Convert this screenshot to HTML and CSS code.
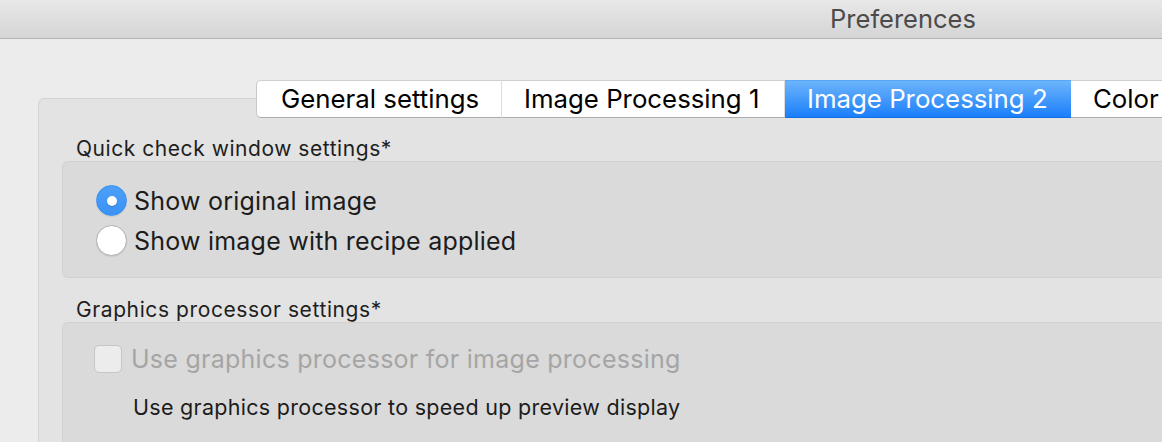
FILE: index.html
```html
<!DOCTYPE html>
<html lang="en">
<head>
  <meta charset="UTF-8">
  <title>Preferences</title>
  <link rel="stylesheet" href="styles.css">
</head>
<body>

<div class="window">
  <div class="titlebar">Preferences</div>

  <div class="content">
    <div class="tabs">
      <div class="tab first">General settings</div>
      <div class="tab">Image Processing 1</div>
      <div class="tab selected">Image Processing 2</div>
      <div class="tab">Color</div>
    </div>

    <div class="tabbox">
      <div class="section-title">Quick check window settings*</div>
      <div class="group">
        <label class="option"><span class="radio checked"></span>Show original image</label>
        <label class="option"><span class="radio"></span>Show image with recipe applied</label>
      </div>

      <div class="section-title narrow">Graphics processor settings*</div>
      <div class="group gpu">
        <label class="option disabled"><span class="checkbox"></span>Use graphics processor for image processing</label>
        <div class="note">Use graphics processor to speed up preview display</div>
      </div>
    </div>
  </div>
</div>

</body>
</html>
```

FILE: styles.css
```css
body {
  margin: 0;
  background: #ececec;
  font-family: Inter, "Liberation Sans", sans-serif;
  color: #1e1e1e;
  overflow: hidden;
  height: 442px;
}

.window {
  width: 1806px;
}

.titlebar {
  height: 38px;
  line-height: 38px;
  text-align: center;
  font-size: 25.5px;
  color: #4b4b4b;
  background: linear-gradient(#e8e8e8, #d5d5d5);
  border-bottom: 1px solid #b3b3b3;
}

.content {
  padding: 41px 38px 0;
}

.tabs {
  display: flex;
  margin-left: 218px;
  height: 38px;
  position: relative;
  z-index: 1;
}

.tab {
  box-sizing: border-box;
  height: 38px;
  line-height: 36px;
  padding: 0 22px;
  font-size: 25.8px;
  color: #000;
  background: #fff;
  border-top: 1px solid #cfcfcf;
  border-bottom: 1px solid #ababab;
  border-right: 1px solid #dcdcdc;
  white-space: nowrap;
}

.tab.first {
  border-left: 1px solid #c8c8c8;
  border-radius: 5px 0 0 5px;
  width: 246px;
  padding-left: 24px;
}

.tab:nth-child(2) {
  width: 283px;
}

.tab.selected {
  width: 286px;
  color: #fff;
  background: linear-gradient(#6db4fb, #1a7ffb);
  border-color: #5aa6f7;
  border-bottom-color: #1470e0;
  border-right: none;
}

.tabbox {
  margin-top: -20px;
  height: 400px;
  background: #e3e3e3;
  border: 1px solid #d3d3d3;
  border-radius: 6px 6px 0 0;
  padding: 38px 0 0 23px;
}

.section-title {
  font-size: 21px;
  letter-spacing: 0.55px;
  margin-left: 14px;
  height: 24px;
  line-height: 24px;
}

.section-title.narrow {
  letter-spacing: 0.6px;
  margin-top: 20px;
}

.group {
  background: #dadada;
  border: 1px solid #d0d0d0;
  border-radius: 6px;
  padding: 23px 0 21px 33px;
  display: flex;
  flex-direction: column;
  gap: 9px;
}

.option {
  display: flex;
  align-items: center;
  gap: 7px;
  font-size: 25px;
  letter-spacing: 0.22px;
  height: 31px;
  color: #1c1c1c;
}

.radio {
  width: 31px;
  height: 31px;
  box-sizing: border-box;
  border-radius: 50%;
  background: #fff;
  border: 1px solid #b0b0b0;
  box-shadow: 0 1px 1px rgba(0, 0, 0, 0.08);
  display: flex;
  align-items: center;
  justify-content: center;
}

.radio.checked {
  background: linear-gradient(#4ca0f8, #3a92f6);
  border-color: #3b8ff0;
}

.radio.checked::after {
  content: "";
  width: 10px;
  height: 10px;
  border-radius: 50%;
  background: #fff;
  box-shadow: 0 1px 1px rgba(0, 0, 0, 0.2);
}

.group.gpu {
  padding: 22px 0 0 31px;
  gap: 21px;
  height: 200px;
}

.option.disabled {
  color: #a5a5a5;
  height: 28px;
  gap: 9px;
  letter-spacing: 0.26px;
}

.checkbox {
  width: 28px;
  height: 28px;
  box-sizing: border-box;
  border-radius: 5px;
  background: #ececec;
  border: 1px solid #c6c6c6;
}

.note {
  font-size: 21.5px;
  letter-spacing: 0.29px;
  margin-left: 39px;
  color: #1c1c1c;
}
```
